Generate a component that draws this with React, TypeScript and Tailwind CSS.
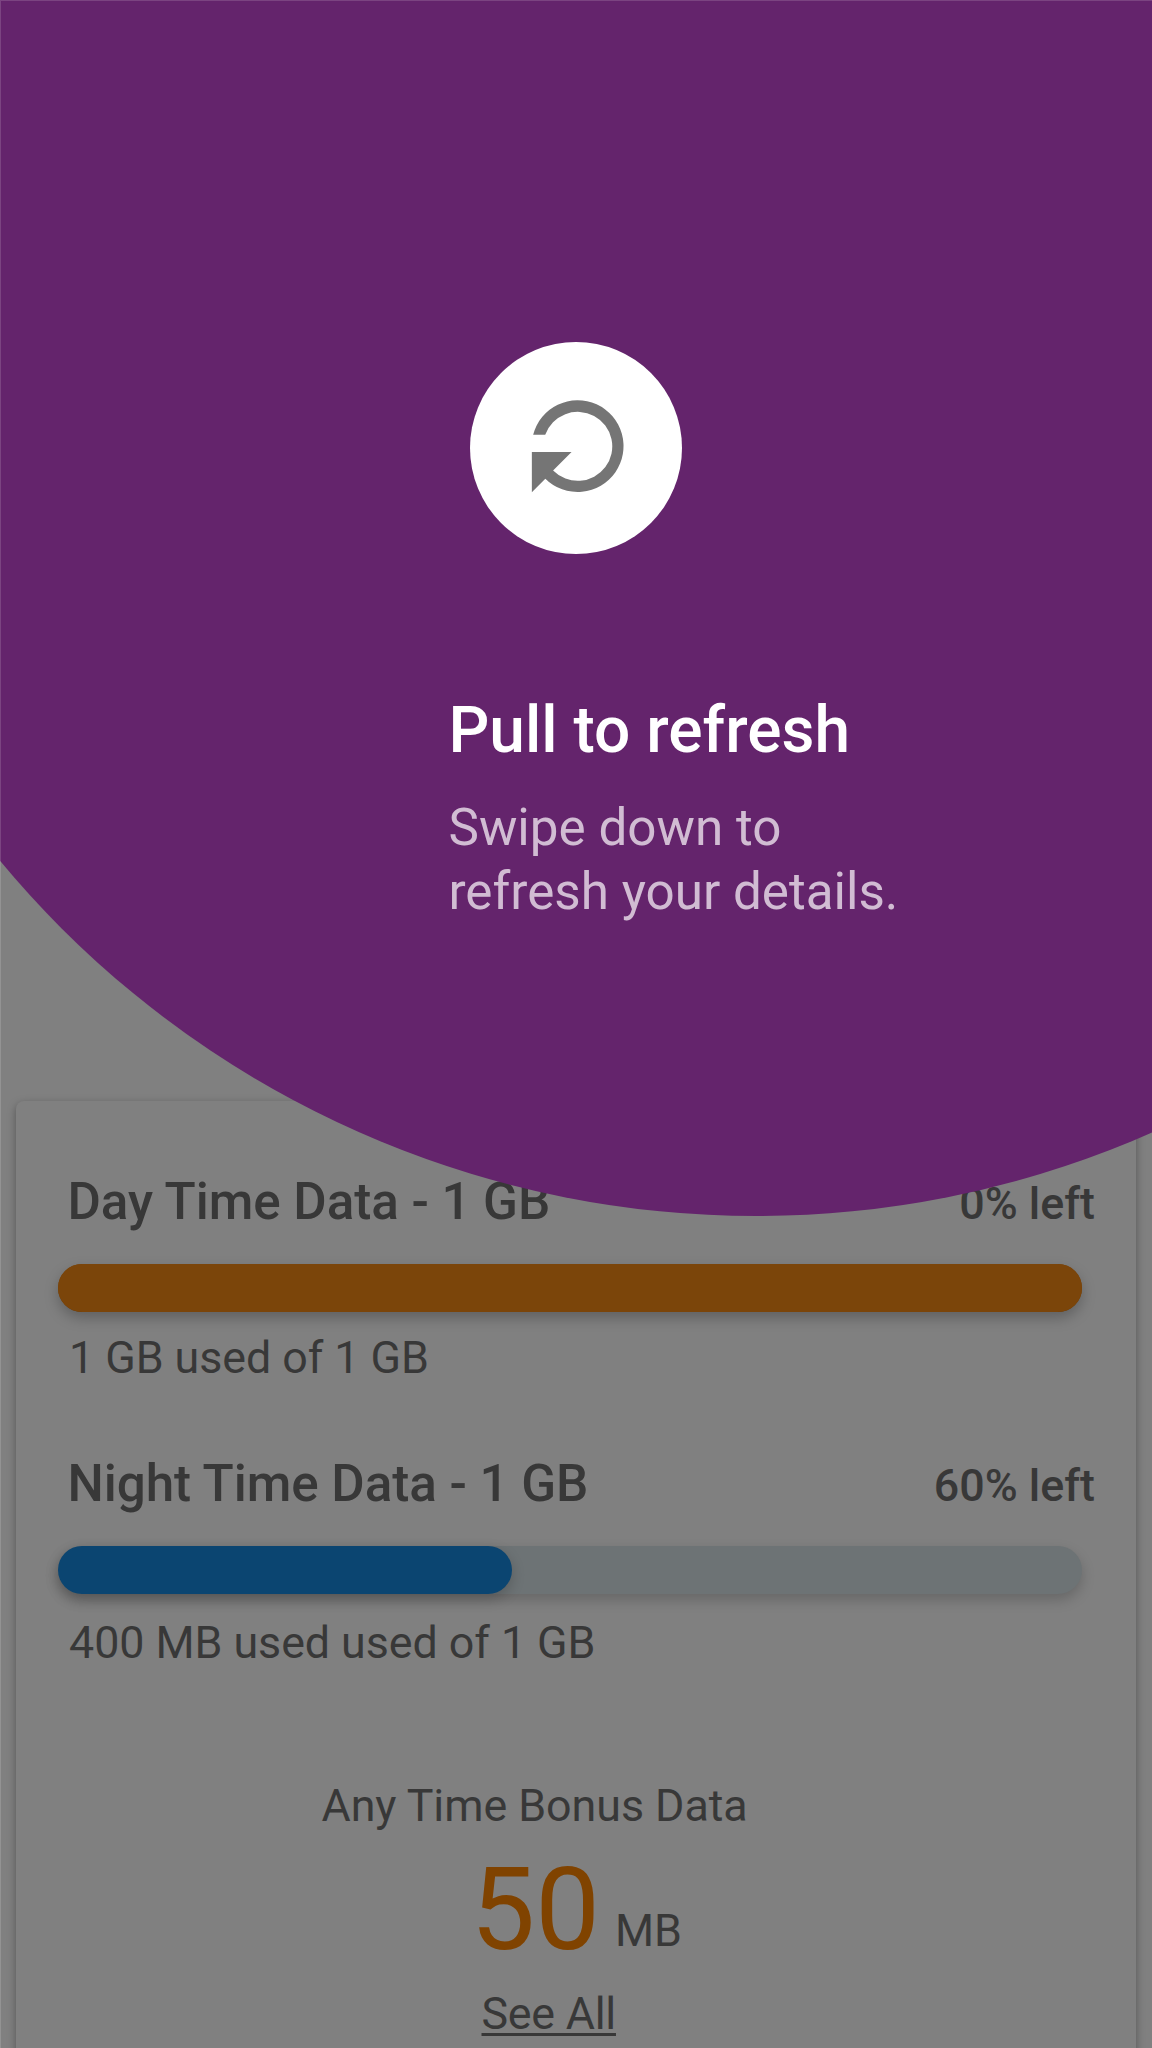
type UsageProps = {
  title: string;
  left: string;
  summary: string;
  trackClass: string;
  fillClass: string;
  fillWidth: number;
  summaryGap: string;
};

function Usage({ title, left, summary, trackClass, fillClass, fillWidth, summaryGap }: UsageProps) {
  return (
    <section>
      <div className="flex h-16 items-baseline justify-between pr-[41px] pl-[51.5px] text-[51.2px] leading-[64px] font-medium">
        <h2 className="tracking-[-0.05px]">{title}</h2>
        <span className="text-[44.8px]">{left}</span>
      </div>
      <div className={`mt-[30px] ml-[42px] h-12 w-[1023.5px] rounded-full ${trackClass}`}>
        <div className={`h-12 rounded-full ${fillClass}`} style={{ width: fillWidth }} />
      </div>
      <p className={`pl-[53px] text-[44.8px] leading-[48px] tracking-[-0.05px] ${summaryGap}`}>{summary}</p>
    </section>
  );
}

function RefreshIcon() {
  return (
    <svg viewBox="0 0 212 212" className="size-full" fill="#757575" aria-hidden="true">
      <path d="M63.3 93A46 46 0 1 1 75.5 137L62 150.5V110.3H101.8L83.3 128.8A34.6 34.6 0 1 0 75.4 93Z" />
    </svg>
  );
}

function PullToRefresh() {
  return (
    <div className="absolute inset-0 overflow-hidden">
      <div className="absolute top-[-748px] left-[-226px] size-[1964px] rounded-full bg-[#64246c]" />
      <div className="relative pt-[342px] text-white">
        <div className="mx-auto size-[211.5px] rounded-full bg-white">
          <RefreshIcon />
        </div>
        <div className="mt-[145.5px] ml-[448.5px]">
          <h1 className="text-[64px] leading-[64px] font-medium">Pull to refresh</h1>
          <p className="mt-[33px] w-[480px] text-[51.2px] leading-[64px] text-[#d1bcd3]">
            Swipe down to
            <br />
            refresh your details.
          </p>
        </div>
      </div>
    </div>
  );
}

export default function App() {
  return (
    <main className="relative h-[2048px] w-[1152px] overflow-hidden bg-[#808080] pt-[1101px] font-[Roboto,sans-serif] text-[#383838]">
      <div className="mr-4 ml-[16px] h-[1000px] rounded-lg bg-[#808080] pt-[69px] shadow-[0_3px_8px_rgba(0,0,0,0.35)]">
        <Usage
          title="Day Time Data - 1 GB"
          left="0% left"
          summary="1 GB used of 1 GB"
          trackClass="bg-[#7b450a]"
          fillClass="bg-[#7b450a] shadow-[0_6px_14px_rgba(0,0,0,0.25)]"
          fillWidth={1023.5}
          summaryGap="mt-[22px]"
        />
        <div className="mt-[70px]">
          <Usage
            title="Night Time Data - 1 GB"
            left="60% left"
            summary="400 MB used used of 1 GB"
            trackClass="bg-[#6d7375] shadow-[0_6px_14px_rgba(0,0,0,0.2)]"
            fillClass="bg-[#0b4571] shadow-[0_5px_14px_rgba(0,0,0,0.2)]"
            fillWidth={454}
            summaryGap="mt-[25px]"
          />
        </div>
        <section className="mt-[115px] text-[44.8px] leading-[48px]">
          <p className="pl-[305.5px] tracking-[-0.05px]">Any Time Bonus Data</p>
          <div className="mt-[20px] flex h-[120px] items-end pl-[454.5px]">
            <span className="text-[115.2px] leading-[120px] text-[#804300]">50</span>
            <span className="ml-[15px] pb-[15px]">MB</span>
          </div>
          <a className="mt-[20px] ml-[465.5px] inline-block tracking-[-0.25px] underline decoration-[3px] underline-offset-[4px]">
            See All
          </a>
        </section>
      </div>
      <PullToRefresh />
      <div className="pointer-events-none absolute inset-0 border-t border-l border-white/15" />
    </main>
  );
}
